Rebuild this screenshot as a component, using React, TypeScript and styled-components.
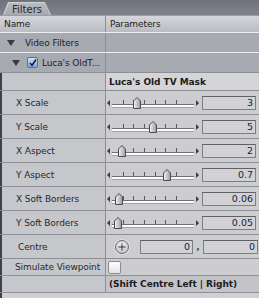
import React from 'react';
import styled, { createGlobalStyle } from 'styled-components';

const GlobalStyle = createGlobalStyle`
  body {
    margin: 0;
    background: #c6c7cb;
    font-family: "DejaVu Sans", "Liberation Sans", sans-serif;
  }
`;

const Panel = styled.div`
  width: 259px;
  height: 298px;
  overflow: hidden;
  display: flex;
  flex-direction: column;
  background: #c6c7cb;
  font-size: 9px;
  letter-spacing: -0.1px;
  color: #1c1c1e;
`;

const TabBar = styled.div`
  height: 15px;
  background: linear-gradient(#6f727b, #80838c);
  display: flex;
  align-items: flex-end;
  padding-left: 3px;
  flex-shrink: 0;
`;

const TabEdge = styled.div`
  height: 13px;
  width: 48px;
  background: #d2d4d8;
  clip-path: polygon(5px 0, 42px 0, 48px 100%, 0 100%);
  padding: 1px 1px 0;
  box-sizing: border-box;
`;

const Tab = styled.div`
  height: 100%;
  background: linear-gradient(#b9bbc1, #a7a9b0);
  clip-path: polygon(5px 0, 41px 0, 46px 100%, 0 100%);
  display: flex;
  align-items: center;
  justify-content: center;
  color: #2a2b30;
  font-size: 10px;
  letter-spacing: 0;
  padding-top: 1px;
  box-sizing: border-box;
`;

const Row = styled.div<{ $h: number; $line?: string }>`
  display: grid;
  grid-template-columns: 105px 1fr;
  height: ${({ $h }) => $h}px;
  border-bottom: 1px solid ${({ $line }) => $line || '#8d8f96'};
  flex-shrink: 0;
`;

const HeaderRow = styled(Row)`
  background: linear-gradient(#d5d6db, #babcc2);
  border-top: 1px solid #9a9ca3;
`;

const GroupRow = styled(Row)`
  background: #a8aab2;
`;

const Cell = styled.div<{ $bg?: string; $bold?: boolean; $pad?: number }>`
  display: flex;
  align-items: center;
  padding-left: ${({ $pad }) => ($pad ?? 0)}px;
  background: ${({ $bg }) => $bg || 'transparent'};
  font-weight: ${({ $bold }) => ($bold ? 'bold' : 'normal')};
  letter-spacing: ${({ $bold }) => ($bold ? '-0.05px' : 'inherit')};
  white-space: nowrap;
  overflow: hidden;
`;

const RightCell = styled(Cell)`
  border-left: 1px solid #8d8f96;
`;

const ParamCell = styled(RightCell)`
  gap: 3px;
`;

const Label = styled(Cell)`
  border-left: 2px solid #3c3f4c;
  padding-left: 14px;
  color: #26272b;
`;

const Disclosure = styled.span<{ $gap: number }>`
  width: 0;
  height: 0;
  border-left: 4px solid transparent;
  border-right: 4px solid transparent;
  border-top: 6px solid #3a3b40;
  margin-right: ${({ $gap }) => $gap}px;
`;

const Check = styled.span`
  width: 9px;
  height: 9px;
  border: 1px solid #6a6d78;
  border-radius: 2px;
  background: linear-gradient(#cfe0f5, #7fa8de);
  display: flex;
  align-items: center;
  justify-content: center;
  margin-right: 4px;
`;

const SliderWrap = styled.div`
  display: flex;
  align-items: center;
  width: 92px;
  height: 100%;
  gap: 2px;
  margin-left: 1px;
`;

const Arrow = styled.span<{ $dir: 'l' | 'r' }>`
  width: 0;
  height: 0;
  border-top: 3px solid transparent;
  border-bottom: 3px solid transparent;
  ${({ $dir }) =>
    $dir === 'l' ? 'border-right: 3px solid #3a3b40;' : 'border-left: 3px solid #3a3b40;'}
  margin-top: 1px;
`;

const Track = styled.div`
  position: relative;
  flex: 1;
  height: 14px;
`;

const TrackLine = styled.div`
  position: absolute;
  left: 0;
  right: 0;
  top: 8px;
  height: 2px;
  background: #fafafa;
  border-top: 1px solid #6e7078;
  border-bottom: 1px solid #a0a2a8;
`;

const Tick = styled.div`
  position: absolute;
  top: 4px;
  width: 1px;
  height: 4px;
  background: #55575e;
`;

const Thumb = styled.svg`
  position: absolute;
  top: 1px;
  margin-left: -4px;
`;

const ValueBox = styled.div<{ $w: number }>`
  width: ${({ $w }) => $w}px;
  height: 14px;
  box-sizing: border-box;
  border: 1px solid #7d7f86;
  border-top-color: #5e6068;
  background: #d2d2d4;
  display: flex;
  align-items: center;
  justify-content: flex-end;
  padding-right: 2px;
  color: #18203c;
  font-size: 9.5px;
  letter-spacing: 0;
`;

const PointRow = styled.div`
  display: flex;
  align-items: center;
  height: 100%;
`;

const Comma = styled.span`
  width: 10px;
  text-align: center;
  color: #2050b0;
  font-weight: bold;
`;

const PlusButton = styled.span`
  width: 12px;
  height: 12px;
  border-radius: 50%;
  border: 1px solid #6a6c74;
  background: radial-gradient(circle at 50% 35%, #f2f2f4, #b8b9be);
  box-shadow: 0 0 0 1px #e2e2e4;
  display: flex;
  align-items: center;
  justify-content: center;
  margin-left: 9px;
  margin-right: 11px;
`;

const EmptyBox = styled.span`
  width: 11px;
  height: 11px;
  border: 1px solid #8a8c92;
  border-radius: 2px;
  background: linear-gradient(#ffffff, #e4e4e6);
  margin-left: 2px;
`;

const Footer = styled.div`
  flex: 1;
  background: #d0d0d2;
  border-left: 2px solid #3c3f4c;
`;

interface Param {
  name: string;
  pos: number;
  value: string;
}

const params: Param[] = [
  { name: 'X Scale', pos: 0.3, value: '3' },
  { name: 'Y Scale', pos: 0.5, value: '5' },
  { name: 'X Aspect', pos: 0.12, value: '2' },
  { name: 'Y Aspect', pos: 0.67, value: '0.7' },
  { name: 'X Soft Borders', pos: 0.08, value: '0.06' },
  { name: 'Y Soft Borders', pos: 0.07, value: '0.05' },
];

const ticks = [0.13, 0.26, 0.39, 0.52, 0.65, 0.78];

const Slider: React.FC<{ pos: number }> = ({ pos }) => (
  <SliderWrap>
    <Arrow $dir="l" />
    <Track>
      {ticks.map((t) => (
        <Tick key={t} style={{ left: `${t * 100}%` }} />
      ))}
      <TrackLine />
      <Thumb width="8" height="12" viewBox="0 0 8 12" style={{ left: `${pos * 100}%` }}>
        <defs>
          <linearGradient id="tg" x1="0" x2="1">
            <stop offset="0" stopColor="#f4f4f6" />
            <stop offset="1" stopColor="#9a9ca2" />
          </linearGradient>
        </defs>
        <path d="M0.5 11.5 V4 L4 0.5 L7.5 4 V11.5 Z" fill="url(#tg)" stroke="#4a4c54" />
      </Thumb>
    </Track>
    <Arrow $dir="r" />
  </SliderWrap>
);

const App: React.FC = () => (
  <Panel>
    <GlobalStyle />
    <TabBar>
      <TabEdge>
        <Tab>Filters</Tab>
      </TabEdge>
    </TabBar>
    <HeaderRow $h={16} $line="#eeeef0">
      <Cell $pad={4}>Name</Cell>
      <RightCell $pad={4}>Parameters</RightCell>
    </HeaderRow>
    <GroupRow $h={19} $line="#eeeef0">
      <Cell $pad={7}>
        <Disclosure $gap={10} />
        Video Filters
      </Cell>
      <RightCell />
    </GroupRow>
    <GroupRow $h={19} $line="#8d8f96">
      <Cell $pad={12}>
        <Disclosure $gap={7} />
        <Check>
          <svg width="8" height="8" viewBox="0 0 8 8">
            <path d="M1 4 L3 6.5 L7 0.5" fill="none" stroke="#10204a" strokeWidth="1.6" />
          </svg>
        </Check>
        Luca's OldT...
      </Cell>
      <RightCell />
    </GroupRow>
    <Row $h={17}>
      <Label />
      <RightCell $bg="#d5d5d7" $bold $pad={3}>
        Luca's Old TV Mask
      </RightCell>
    </Row>
    {params.map((p) => (
      <Row key={p.name} $h={23}>
        <Label>{p.name}</Label>
        <ParamCell $bg="#cdcdcf">
          <Slider pos={p.pos} />
          <ValueBox $w={54}>{p.value}</ValueBox>
        </ParamCell>
      </Row>
    ))}
    <Row $h={23}>
      <Label style={{ paddingLeft: 16 }}>Centre</Label>
      <RightCell $bg="#cdcdcf">
        <PointRow>
          <PlusButton>
            <svg width="8" height="8" viewBox="0 0 8 8">
              <path d="M4 0.5 V7.5 M0.5 4 H7.5" stroke="#333" strokeWidth="1" />
            </svg>
          </PlusButton>
          <ValueBox $w={53}>0</ValueBox>
          <Comma>,</Comma>
          <ValueBox $w={55}>0</ValueBox>
        </PointRow>
      </RightCell>
    </Row>
    <Row $h={16}>
      <Label style={{ paddingLeft: 13 }}>Simulate Viewpoint</Label>
      <RightCell $bg="#cdcdcf">
        <EmptyBox />
      </RightCell>
    </Row>
    <Row $h={16}>
      <Label />
      <RightCell $bg="#c3c4c8" $bold $pad={3}>
        (Shift Centre Left | Right)
      </RightCell>
    </Row>
    <Footer />
  </Panel>
);

export default App;
